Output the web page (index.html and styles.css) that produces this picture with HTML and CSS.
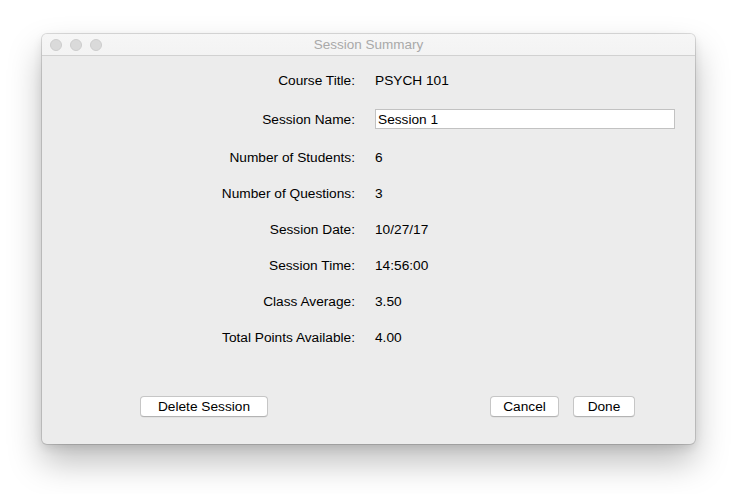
FILE: index.html
```html
<!DOCTYPE html>
<html>
<head>
<meta charset="utf-8">
<link rel="stylesheet" href="styles.css">
</head>
<body>
<div class="window">
  <div class="titlebar">
    <div class="lights"><span class="light"></span><span class="light"></span><span class="light"></span></div>
    <div class="title">Session Summary</div>
  </div>
  <div class="content">
    <div class="form">
      <div class="row r1"><div class="label">Course Title:</div><div class="value">PSYCH 101</div></div>
      <div class="row r2"><div class="label">Session Name:</div><div class="value"><input class="field" type="text" value="Session 1"></div></div>
      <div class="row r3"><div class="label">Number of Students:</div><div class="value">6</div></div>
      <div class="row"><div class="label">Number of Questions:</div><div class="value">3</div></div>
      <div class="row"><div class="label">Session Date:</div><div class="value">10/27/17</div></div>
      <div class="row"><div class="label">Session Time:</div><div class="value">14:56:00</div></div>
      <div class="row"><div class="label">Class Average:</div><div class="value">3.50</div></div>
      <div class="row"><div class="label">Total Points Available:</div><div class="value">4.00</div></div>
    </div>
    <div class="buttons">
      <button class="btn delete">Delete Session</button>
      <div class="right">
        <button class="btn cancel">Cancel</button>
        <button class="btn done">Done</button>
      </div>
    </div>
  </div>
</div>
</body>
</html>
```
FILE: styles.css
```css
html, body {
  margin: 0;
  padding: 0;
  background: #ffffff;
}
body {
  font-family: "Liberation Sans", Arial, sans-serif;
  font-size: 13.7px;
  color: #000;
  padding-top: 34px;
  padding-left: 42px;
  height: 494px;
  box-sizing: border-box;
}
.window {
  width: 653px;
  height: 410px;
  box-sizing: border-box;
  background: #ececec;
  border-radius: 5px;
  box-shadow: 0 0 0 1px rgba(0,0,0,0.13), 0 18px 34px rgba(0,0,0,0.26), 0 4px 10px rgba(0,0,0,0.10);
  display: flex;
  flex-direction: column;
  overflow: hidden;
}
.titlebar {
  height: 21px;
  background: linear-gradient(#f6f6f6, #f3f3f3);
  border-bottom: 1px solid #d1d1d1;
  display: flex;
  align-items: center;
  position: relative;
  flex: none;
}
.lights {
  display: flex;
  gap: 8px;
  padding-left: 8px;
}
.light {
  width: 12px;
  height: 12px;
  box-sizing: border-box;
  border-radius: 50%;
  background: #dadada;
  border: 0.5px solid #cdcdcd;
}
.title {
  position: absolute;
  left: 0;
  right: 0;
  text-align: center;
  color: #a9a9a9;
  font-size: 13.5px;
  line-height: 21px;
}
.content {
  flex: 1;
  display: flex;
  flex-direction: column;
  padding-bottom: 27px;
}
.form {
  display: flex;
  flex-direction: column;
  gap: 16px;
  padding-top: 14px;
}
.row {
  display: flex;
  align-items: center;
  height: 20px;
}
.r2 { margin-top: 3px; }
.r3 { margin-top: 2px; }
.label {
  width: 313px;
  text-align: right;
  flex: none;
}
.value {
  padding-left: 20px;
}
.field {
  display: block;
  width: 300px;
  height: 20px;
  box-sizing: border-box;
  border: 1px solid #c2c2c2;
  background: #fff;
  font-family: "Liberation Sans", Arial, sans-serif;
  font-size: 13.7px;
  color: #000;
  padding: 1px 2px 0;
  margin: -1px 0 0 0;
  outline: none;
}
.buttons {
  margin-top: auto;
  display: flex;
  justify-content: space-between;
  align-items: center;
  padding-left: 98px;
  padding-right: 60px;
}
.right {
  display: flex;
  gap: 14px;
}
.btn {
  height: 21px;
  box-sizing: border-box;
  background: #ffffff;
  border: 1px solid #c6c6c6;
  border-bottom-color: #b3b3b3;
  border-radius: 4px;
  font-family: "Liberation Sans", Arial, sans-serif;
  font-size: 13.7px;
  color: #000;
  padding: 0;
  box-shadow: 0 0.5px 0.5px rgba(0,0,0,0.08);
}
.delete { width: 128px; }
.cancel { width: 69px; }
.done { width: 62px; }
```
